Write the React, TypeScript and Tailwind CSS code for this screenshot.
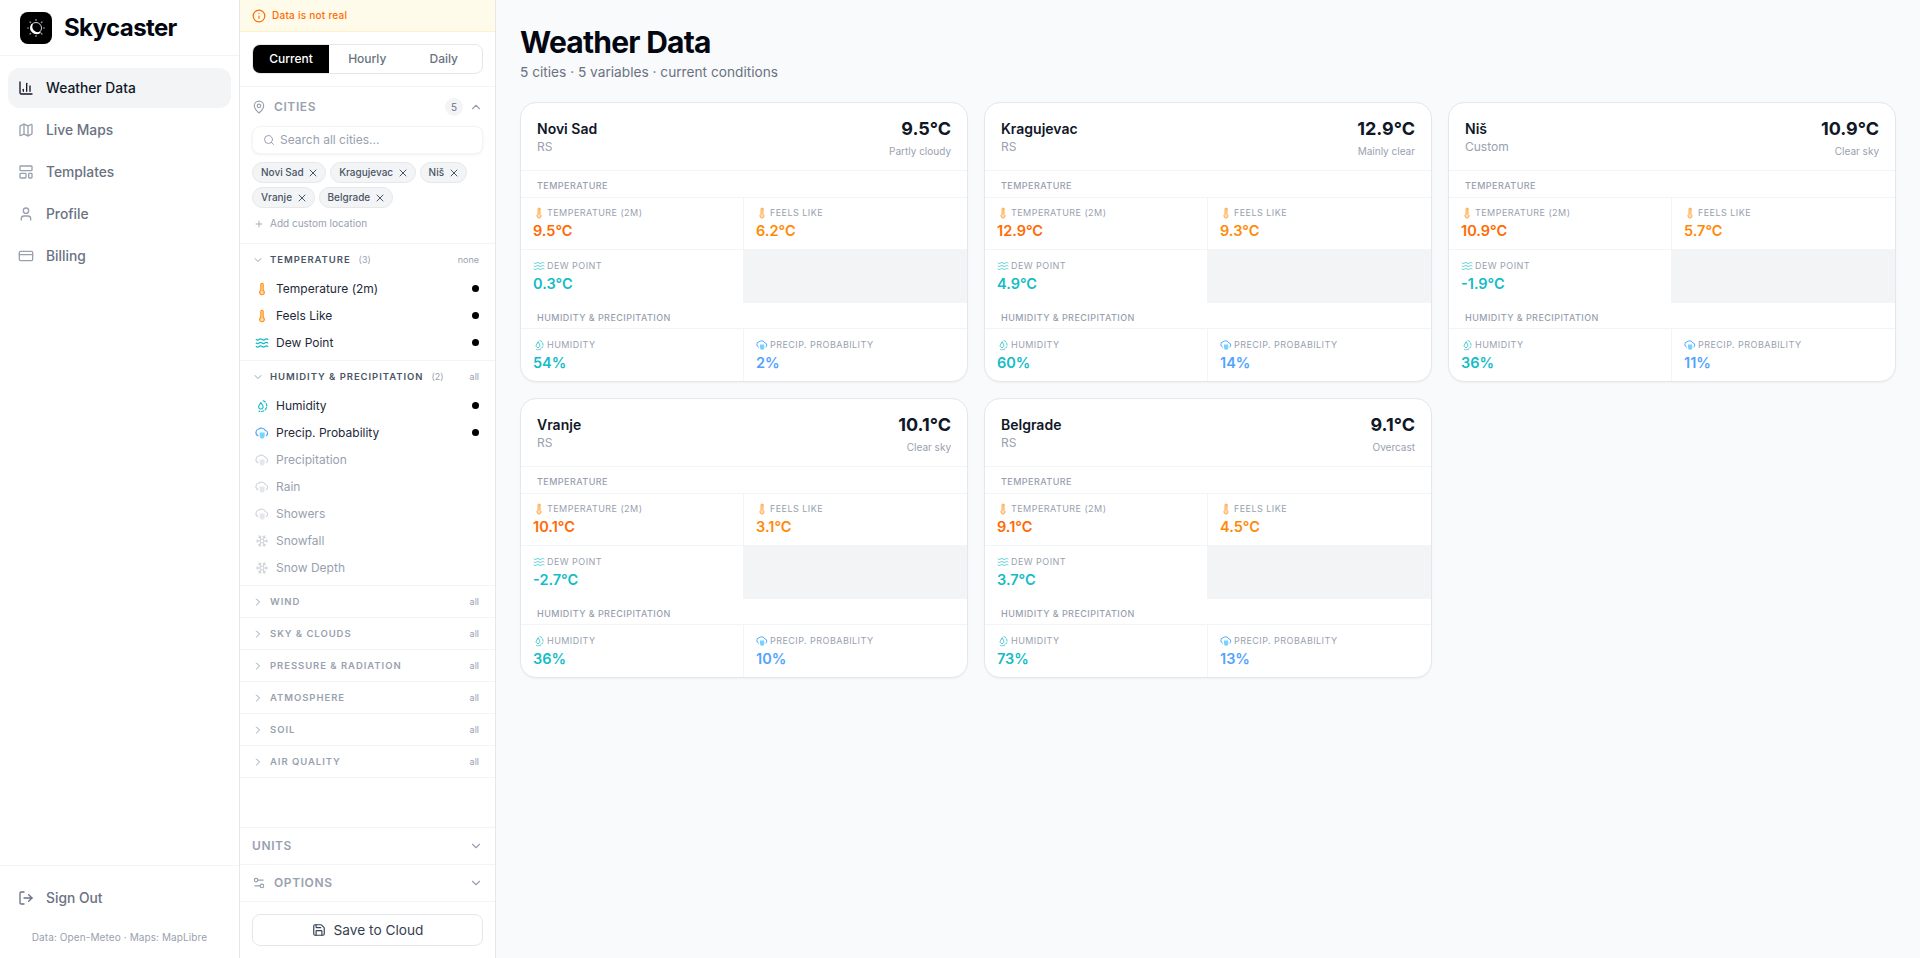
import { BarChart3, Map, LayoutTemplate, User, CreditCard, LogOut, Info, MapPin, ChevronUp, ChevronDown, ChevronRight, Search, X, Plus, Thermometer, Waves, Snowflake, Settings2, Save } from 'lucide-react';

const font = { fontFamily: 'Inter, "Noto Sans", sans-serif' };

function HumidityIcon({ className }: { className?: string }) {
    return (
        <svg viewBox="0 0 24 24" fill="none" stroke="currentColor" strokeWidth="2" strokeLinecap="round" strokeLinejoin="round" className={className}>
            <path d="M10 6 L6.8 11.5 A3.8 3.8 0 1 0 13.4 11.5 Z" />
            <path d="M14 3 A9.5 9.5 0 0 1 7 20.8" strokeDasharray="4 3" />
        </svg>
    );
}

function TempIcon({ className }: { className?: string }) {
    return <Thermometer className={`${className} fill-orange-200 text-orange-400`} strokeWidth={1.8} />;
}

function RainIcon({ className, fill }: { className?: string; fill: string }) {
    return (
        <svg viewBox="0 0 24 24" fill="none" stroke="currentColor" strokeWidth="2" strokeLinecap="round" strokeLinejoin="round" className={className}>
            <path d="M5 16.5A6 6 0 0 1 6.5 5.2a7.5 7.5 0 0 1 11.3 2.6 4.8 4.8 0 0 1 1.7 8.7" />
            <path d="M8 11h8.5v7l-2 3.5h-4.5l-2-3.5Z" className={fill} stroke="none" />
        </svg>
    );
}

function Logo() {
    return (
        <div className="flex h-8 w-8 items-center justify-center rounded-lg bg-black">
            <svg viewBox="0 0 32 32" className="h-8 w-8" fill="none">
                <circle cx="16" cy="16" r="5.5" stroke="#d1d5db" strokeWidth="1" />
                <path d="M12 12.5a5.8 5.8 0 0 0 8 8 6.3 6.3 0 0 1-8-8Z" fill="white" stroke="white" strokeWidth="1.4" strokeLinejoin="round" />
                <g stroke="#9ca3af" strokeWidth="1.2" strokeLinecap="round">
                    <path d="M16 7.5v1" />
                    <path d="M16 23.5v1" />
                    <path d="M7.5 16h1" />
                    <path d="M23.5 16h1" />
                    <path d="M10 10l.7.7" />
                    <path d="M21.3 21.3l.7.7" />
                    <path d="M22 10l-.7.7" />
                    <path d="M10.7 21.3l-.7.7" />
                </g>
            </svg>
        </div>
    );
}

const navItems = [
    { label: 'Weather Data', icon: BarChart3, active: true },
    { label: 'Live Maps', icon: Map },
    { label: 'Templates', icon: LayoutTemplate },
    { label: 'Profile', icon: User },
    { label: 'Billing', icon: CreditCard },
];

function Sidebar() {
    return (
        <aside className="flex h-full w-[240px] shrink-0 flex-col border-r border-gray-200 bg-white">
            <div className="flex h-14 items-center gap-3 border-b border-gray-100 pl-5">
                <Logo />
                <span className="text-[24px] leading-8 font-bold tracking-tight text-gray-950">Skycaster</span>
            </div>
            <nav className="flex flex-1 flex-col gap-0.5 px-2 pt-3">
                {navItems.map((item) => (
                    <div key={item.label} className={`flex h-10 items-center gap-3 rounded-xl px-2.5 text-[13.8px] font-medium ${item.active ? 'bg-gray-100 text-gray-900' : 'text-gray-500'}`}>
                        <item.icon className={`h-4 w-4 ${item.active ? 'text-gray-900' : 'text-gray-400'}`} />
                        {item.label}
                    </div>
                ))}
            </nav>
            <div className="border-t border-gray-100 px-2 pt-3 pb-[13px]">
                <div className="flex h-10 items-center gap-3 px-2.5 text-[13.8px] font-medium text-gray-500">
                    <LogOut className="h-4 w-4" />
                    Sign Out
                </div>
                <p className="mt-3 text-center text-[10px] leading-[15px] tracking-[0.01em] text-gray-400">Data: Open-Meteo · Maps: MapLibre</p>
            </div>
        </aside>
    );
}

function Chip({ label }: { label: string }) {
    return (
        <span className="flex h-[21px] items-center gap-[3.5px] rounded-full border border-gray-200 bg-gray-100 pr-1.5 pl-2 text-[10px] font-medium text-gray-600">
            {label}
            <X className="h-3 w-3 text-gray-600" />
        </span>
    );
}

type Variable = { label: string; kind: 'temp' | 'waves' | 'humidity' | 'rain' | 'snow'; on?: boolean };

const temperatureVars: Variable[] = [
    { label: 'Temperature (2m)', kind: 'temp', on: true },
    { label: 'Feels Like', kind: 'temp', on: true },
    { label: 'Dew Point', kind: 'waves', on: true },
];

const humidityVars: Variable[] = [
    { label: 'Humidity', kind: 'humidity', on: true },
    { label: 'Precip. Probability', kind: 'rain', on: true },
    { label: 'Precipitation', kind: 'rain' },
    { label: 'Rain', kind: 'rain' },
    { label: 'Showers', kind: 'rain' },
    { label: 'Snowfall', kind: 'snow' },
    { label: 'Snow Depth', kind: 'snow' },
];

function VarIcon({ kind, on }: { kind: Variable['kind']; on?: boolean }) {
    if (kind === 'temp') return <TempIcon className="h-[14px] w-[14px] shrink-0" />;
    if (kind === 'waves') return <Waves className="h-[14px] w-[14px] shrink-0 text-[#13bcc6]" />;
    if (kind === 'humidity') return <HumidityIcon className="h-[14px] w-[14px] shrink-0 text-[#13bcc6]" />;
    if (kind === 'snow') return <Snowflake className="h-[14px] w-[14px] shrink-0 text-gray-300" />;
    return <RainIcon className={`h-[14px] w-[14px] shrink-0 ${on ? 'text-blue-400' : 'text-gray-300'}`} fill={on ? 'fill-sky-300' : 'fill-gray-200'} />;
}

function VarGroup({ title, count, action, vars }: { title: string; count: number; action: string; vars: Variable[] }) {
    return (
        <div className="border-b border-gray-100 pb-1">
            <div className="flex h-[31px] items-center gap-1.5 pt-px pr-4 pl-3">
                <ChevronDown className="h-3 w-3 text-gray-400" />
                <span className="text-[9.5px] font-semibold tracking-widest text-gray-600 uppercase">{title}</span>
                <span className="ml-0.5 text-[9px] text-gray-400">({count})</span>
                <span className="ml-auto text-[9px] text-gray-400">{action}</span>
            </div>
            {vars.map((v) => (
                <div key={v.label} className="flex h-[27px] items-center gap-[7px] pr-4 pl-[15px]">
                    <VarIcon kind={v.kind} on={v.on} />
                    <span className={`text-xs ${v.on ? 'text-gray-800' : 'text-gray-400'}`}>{v.label}</span>
                    {v.on && <span className="ml-auto h-[7px] w-[7px] rounded-full bg-black" />}
                </div>
            ))}
        </div>
    );
}

const closedGroups = ['Wind', 'Sky & Clouds', 'Pressure & Radiation', 'Atmosphere', 'Soil', 'Air Quality'];

function ControlPanel() {
    return (
        <aside className="flex h-full w-[256px] shrink-0 flex-col border-r border-gray-200 bg-white">
            <div className="flex h-8 items-center gap-1.5 border-b border-amber-100 bg-amber-50 pl-3">
                <Info className="h-3.5 w-3.5 text-orange-500" />
                <span className="text-[10px] font-medium tracking-wide text-orange-500">Data is not real</span>
            </div>
            <div className="border-b border-gray-100 p-3">
                <div className="flex h-[30px] overflow-hidden rounded-lg border border-gray-200 text-xs">
                    <div className="flex w-[76px] items-center justify-center bg-black font-medium text-white">Current</div>
                    <div className="flex flex-1 items-center justify-center font-medium text-gray-500">Hourly</div>
                    <div className="flex flex-1 items-center justify-center font-medium text-gray-500">Daily</div>
                </div>
            </div>
            <div className="border-b border-gray-100 px-3 pt-[11px] pb-3">
                <div className="flex h-[18px] items-center">
                    <MapPin className="h-3.5 w-3.5 text-gray-400" />
                    <span className="ml-2 text-xs font-semibold tracking-wider text-gray-400">CITIES</span>
                    <span className="mr-1.5 ml-auto flex h-[18px] w-[18px] items-center justify-center rounded-full bg-gray-100 text-[10px] text-gray-500">5</span>
                    <ChevronUp className="h-3.5 w-3.5 text-gray-400" />
                </div>
                <div className="mt-2.5 flex h-7 items-center gap-[5px] rounded-lg border border-gray-100 bg-white pl-2.5 shadow-[0_1px_3px_rgba(0,0,0,0.06)]">
                    <Search className="h-3 w-3 text-gray-400" />
                    <span className="text-xs text-gray-400">Search all cities...</span>
                </div>
                <div className="mt-2 flex flex-wrap gap-1">
                    {['Novi Sad', 'Kragujevac', 'Niš', 'Vranje', 'Belgrade'].map((c) => (
                        <Chip key={c} label={c} />
                    ))}
                </div>
                <div className="mt-2 flex h-[15px] items-center gap-1.5 pl-0.5 text-[10px] text-gray-400">
                    <Plus className="h-2.5 w-2.5" />
                    Add custom location
                </div>
            </div>
            <div className="flex-1 overflow-hidden">
                <VarGroup title="Temperature" count={3} action="none" vars={temperatureVars} />
                <VarGroup title="Humidity & Precipitation" count={2} action="all" vars={humidityVars} />
                {closedGroups.map((g) => (
                    <div key={g} className="flex h-8 items-center gap-1.5 border-b border-gray-100 pt-px pr-4 pl-3">
                        <ChevronRight className="h-3 w-3 text-gray-400" />
                        <span className="text-[9.5px] font-semibold tracking-widest text-gray-400 uppercase">{g}</span>
                        <span className="ml-auto text-[9px] text-gray-400">all</span>
                    </div>
                ))}
            </div>
            <div className="flex h-[37px] items-center justify-between border-t border-gray-100 px-3">
                <span className="text-xs font-semibold tracking-wider text-gray-400">UNITS</span>
                <ChevronDown className="h-3.5 w-3.5 text-gray-400" />
            </div>
            <div className="flex h-[37px] items-center border-t border-gray-100 px-3">
                <Settings2 className="h-3.5 w-3.5 text-gray-400" />
                <span className="ml-2 text-xs font-semibold tracking-wider text-gray-400">OPTIONS</span>
                <ChevronDown className="ml-auto h-3.5 w-3.5 text-gray-400" />
            </div>
            <div className="border-t border-gray-100 p-3">
                <div className="flex h-8 items-center justify-center gap-2 rounded-lg border border-gray-200 text-[13.7px] text-gray-700">
                    <Save className="h-3.5 w-3.5" />
                    Save to Cloud
                </div>
            </div>
        </aside>
    );
}

function VarIconSmall({ kind }: { kind: Variable['kind'] }) {
    if (kind === 'temp') return <TempIcon className="h-3 w-3 shrink-0 opacity-80" />;
    if (kind === 'waves') return <Waves className="h-3 w-3 shrink-0 text-[#13bcc6] opacity-70" />;
    if (kind === 'humidity') return <HumidityIcon className="h-3 w-3 shrink-0 text-[#13bcc6] opacity-80" />;
    return <RainIcon className="h-3 w-3 shrink-0 text-blue-400" fill="fill-sky-300" />;
}

function Metric({ label, value, kind, color, right }: { label: string; value: string; kind: Variable['kind']; color: string; right?: boolean }) {
    return (
        <div className={`flex flex-col justify-center pl-3 ${right ? '' : 'border-r border-gray-100'}`}>
            <div className="flex items-center gap-0.5">
                <VarIconSmall kind={kind} />
                <span className="text-[9px] leading-[14px] tracking-wider text-gray-400 uppercase">{label}</span>
            </div>
            <span className={`mt-px text-[14.5px] leading-5 font-semibold ${color}`}>{value}</span>
        </div>
    );
}

type City = { name: string; region: string; temp: string; sky: string; t2m: string; feels: string; dew: string; humidity: string; precip: string };

const cities: City[] = [
    { name: 'Novi Sad', region: 'RS', temp: '9.5°C', sky: 'Partly cloudy', t2m: '9.5°C', feels: '6.2°C', dew: '0.3°C', humidity: '54%', precip: '2%' },
    { name: 'Kragujevac', region: 'RS', temp: '12.9°C', sky: 'Mainly clear', t2m: '12.9°C', feels: '9.3°C', dew: '4.9°C', humidity: '60%', precip: '14%' },
    { name: 'Niš', region: 'Custom', temp: '10.9°C', sky: 'Clear sky', t2m: '10.9°C', feels: '5.7°C', dew: '-1.9°C', humidity: '36%', precip: '11%' },
    { name: 'Vranje', region: 'RS', temp: '10.1°C', sky: 'Clear sky', t2m: '10.1°C', feels: '3.1°C', dew: '-2.7°C', humidity: '36%', precip: '10%' },
    { name: 'Belgrade', region: 'RS', temp: '9.1°C', sky: 'Overcast', t2m: '9.1°C', feels: '4.5°C', dew: '3.7°C', humidity: '73%', precip: '13%' },
];

function CityCard({ city }: { city: City }) {
    return (
        <div className="overflow-hidden rounded-2xl border border-gray-200 bg-white shadow-[0_1px_2px_rgba(0,0,0,0.04)]">
            <div className="flex h-[68px] items-start justify-between border-b border-gray-100 px-4 pt-4">
                <div>
                    <div className="text-sm leading-5 font-semibold text-gray-900">{city.name}</div>
                    <div className="text-xs leading-4 text-gray-400">{city.region}</div>
                </div>
                <div className="text-right">
                    <div className="text-lg leading-5 font-bold text-gray-900">{city.temp}</div>
                    <div className="mt-1 text-[10px] leading-4 text-gray-400">{city.sky}</div>
                </div>
            </div>
            <div className="flex h-[27px] items-center border-b border-gray-100 px-4 pt-[3px] text-[9px] font-medium tracking-wider text-gray-400 uppercase">Temperature</div>
            <div className="grid h-[52px] grid-cols-2 border-b border-gray-100">
                <Metric label="Temperature (2m)" value={city.t2m} kind="temp" color="text-orange-500" />
                <Metric label="Feels Like" value={city.feels} kind="temp" color="text-orange-400" right />
            </div>
            <div className="grid h-[53px] grid-cols-2">
                <Metric label="Dew Point" value={city.dew} kind="waves" color="text-[#13bcc6]" />
                <div className="bg-gray-100" />
            </div>
            <div className="flex h-[26px] items-center border-b border-gray-100 px-4 pt-1 text-[9px] font-medium tracking-wider text-gray-400 uppercase">{'Humidity & Precipitation'}</div>
            <div className="grid h-[52px] grid-cols-2">
                <Metric label="Humidity" value={city.humidity} kind="humidity" color="text-[#13bcc6]" />
                <Metric label="Precip. Probability" value={city.precip} kind="rain" color="text-blue-400" right />
            </div>
        </div>
    );
}

export default function App() {
    return (
        <div className="flex h-screen w-full overflow-hidden bg-[#f9fafb]" style={font}>
            <Sidebar />
            <ControlPanel />
            <main className="flex-1 overflow-hidden p-6">
                <h1 className="text-3xl font-bold tracking-tight text-gray-950">Weather Data</h1>
                <p className="mt-0.5 mb-5 text-[13.7px] leading-5 text-gray-500">5 cities · 5 variables · current conditions</p>
                <div className="grid grid-cols-3 gap-4">
                    {cities.map((c) => (
                        <CityCard key={c.name} city={c} />
                    ))}
                </div>
            </main>
        </div>
    );
}
